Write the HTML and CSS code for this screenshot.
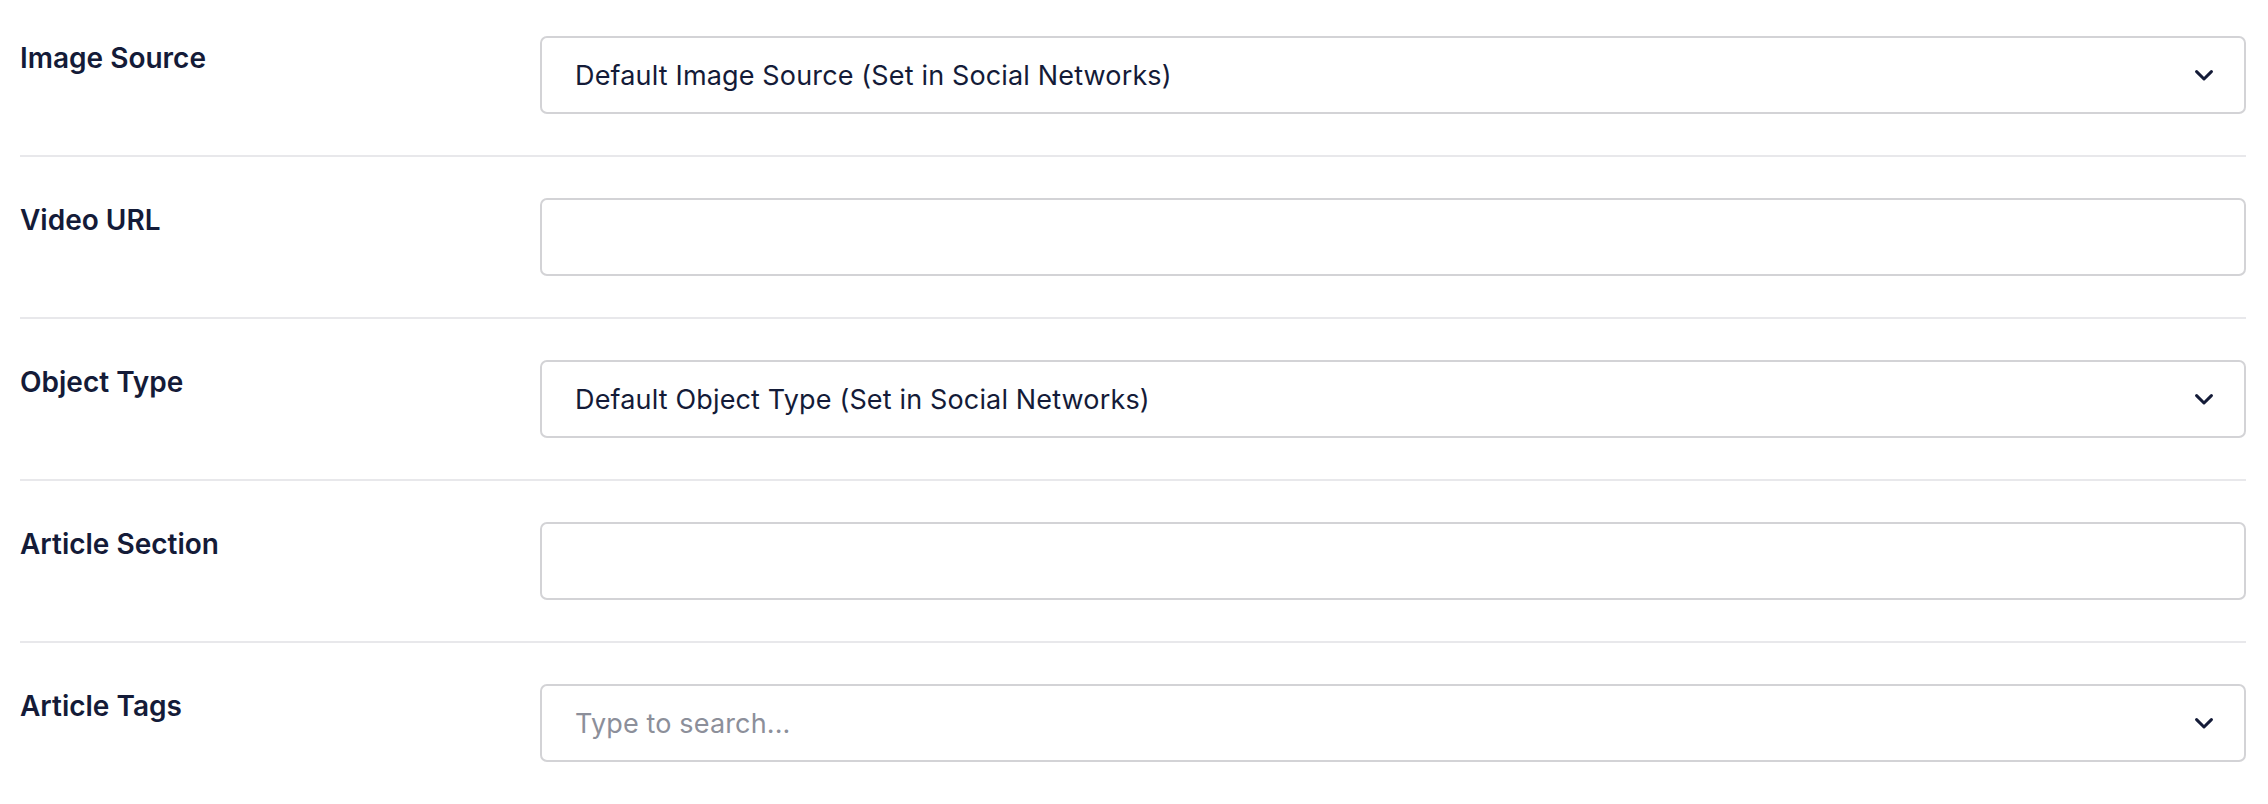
FILE: index.html
```html
<!DOCTYPE html>
<html lang="en">
<head>
<meta charset="utf-8">
<title>Social Settings</title>
<link rel="stylesheet" href="styles.css">
</head>
<body>
<div class="settings">
  <div class="row">
    <div class="label">Image Source</div>
    <div class="control">
      <div class="select">
        <span class="select-value">Default Image Source (Set in Social Networks)</span>
        <svg class="chevron" viewBox="0 0 18 11" width="18" height="11" aria-hidden="true"><path d="M1.6 1.6 L9 9 L16.4 1.6"/></svg>
      </div>
    </div>
  </div>
  <div class="row">
    <div class="label">Video URL</div>
    <div class="control">
      <input class="text-input" type="text" value="">
    </div>
  </div>
  <div class="row">
    <div class="label">Object Type</div>
    <div class="control">
      <div class="select">
        <span class="select-value">Default Object Type (Set in Social Networks)</span>
        <svg class="chevron" viewBox="0 0 18 11" width="18" height="11" aria-hidden="true"><path d="M1.6 1.6 L9 9 L16.4 1.6"/></svg>
      </div>
    </div>
  </div>
  <div class="row">
    <div class="label">Article Section</div>
    <div class="control">
      <input class="text-input" type="text" value="">
    </div>
  </div>
  <div class="row">
    <div class="label">Article Tags</div>
    <div class="control">
      <div class="select">
        <input class="search-input" type="text" placeholder="Type to search...">
        <svg class="chevron" viewBox="0 0 18 11" width="18" height="11" aria-hidden="true"><path d="M1.6 1.6 L9 9 L16.4 1.6"/></svg>
      </div>
    </div>
  </div>
</div>
</body>
</html>
```

FILE: styles.css
```css
* {
  box-sizing: border-box;
}

html, body {
  margin: 0;
  padding: 0;
  background: #ffffff;
}

body {
  font-family: Inter, "Noto Sans", "Liberation Sans", sans-serif;
  color: #141b38;
}

.settings {
  padding: 0 22px 0 20px;
}

.row {
  display: grid;
  grid-template-columns: 520px 1fr;
  padding: 41px 0 41px;
  border-bottom: 2px solid #e8e8eb;
}

.row:first-child {
  padding-top: 36px;
}

.row:last-child {
  border-bottom: none;
}

.label {
  font-size: 28px;
  font-weight: 600;
  line-height: 44px;
  color: #141b38;
}

.control {
  min-width: 0;
}

.select,
.text-input {
  display: flex;
  align-items: center;
  width: 100%;
  height: 78px;
  border: 2px solid #d3d3d6;
  border-radius: 7px;
  background: #ffffff;
}

.select {
  padding: 0 31px 0 33px;
  justify-content: space-between;
}

.select-value {
  padding-top: 2px;
  font-size: 27px;
  letter-spacing: 0.15px;
  line-height: 34px;
  color: #141b38;
}

.text-input {
  padding: 0 33px;
  font-family: inherit;
  font-size: 27px;
  color: #141b38;
  outline: none;
}

.search-input {
  flex: 1;
  border: none;
  outline: none;
  padding: 2px 0 0;
  margin: 0;
  font-family: inherit;
  font-size: 27px;
  letter-spacing: 0.15px;
  line-height: 34px;
  color: #141b38;
  background: transparent;
}

.search-input::placeholder {
  color: #8c8f9a;
  opacity: 1;
}

.chevron {
  flex: none;
  fill: none;
  stroke: #141b38;
  stroke-width: 3;
  stroke-linecap: round;
  stroke-linejoin: round;
}
```
